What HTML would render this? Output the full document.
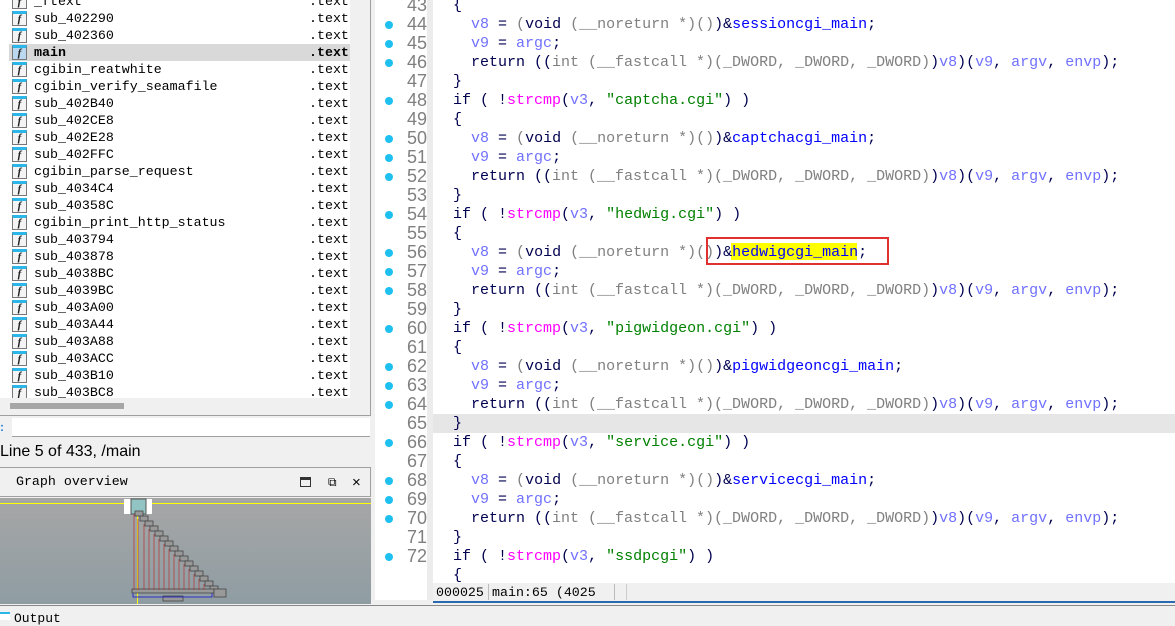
<!DOCTYPE html>
<html><head><meta charset="utf-8"><style>
*{margin:0;padding:0;box-sizing:border-box}
body{width:1175px;height:620px;overflow:hidden;background:#f0f0f0;position:relative;font-family:"Liberation Mono",monospace}
.abs{position:absolute}
#list{left:0;top:0;width:350px;height:398px;background:#fff;overflow:hidden}
.row{position:absolute;left:0;width:350px;height:17px;font-size:13.3px;line-height:17px;color:#000}
.row .ic{position:absolute;left:12px;top:1px;width:15px;height:15px;border:1px solid #777;border-top:3px solid #2bb8e8;background:#f4f4f4;font:italic bold 11px "Liberation Serif",serif;text-align:center;line-height:11px;color:#222}
.row .n{position:absolute;left:34px}
.row .s{position:absolute;left:309px}
.sel{background:#d9d9d9}
.sel .n,.sel .s{font-weight:bold}
#code{left:433px;top:0;width:742px;height:583px;background:#fff;overflow:hidden}
#gut{left:375px;top:0;width:58px;height:600px;background:#fff;overflow:hidden}
.ln{position:absolute;left:0;width:52px;height:19px;font-size:18px;line-height:19px;color:#808080;text-align:right;font-family:"Liberation Sans",sans-serif}
.dot{position:absolute;left:10px;top:6px;width:8px;height:8px;border-radius:50%;background:#1ec0f0}
.cl{position:absolute;left:20px;height:19px;font-size:15px;line-height:19px;white-space:pre;color:#000050}
.v{color:#7070ff}.g{color:#808080}.m{color:#ff00ff}.str{color:#008000}.f{color:#0000ff}
</style></head><body>
<div id="list" class="abs">
<div class="row" style="top:-7px"><span class="ic">f</span><span class="n">_ftext</span><span class="s">.text</span></div>
<div class="row" style="top:10px"><span class="ic">f</span><span class="n">sub_402290</span><span class="s">.text</span></div>
<div class="row" style="top:27px"><span class="ic">f</span><span class="n">sub_402360</span><span class="s">.text</span></div>
<div class="row sel" style="top:44px;left:9px;width:341px"><span class="ic" style="left:3px;background:#bcd8f0">f</span><span class="n" style="left:25px">main</span><span class="s" style="left:300px">.text</span></div>
<div class="row" style="top:61px"><span class="ic">f</span><span class="n">cgibin_reatwhite</span><span class="s">.text</span></div>
<div class="row" style="top:78px"><span class="ic">f</span><span class="n">cgibin_verify_seamafile</span><span class="s">.text</span></div>
<div class="row" style="top:95px"><span class="ic">f</span><span class="n">sub_402B40</span><span class="s">.text</span></div>
<div class="row" style="top:112px"><span class="ic">f</span><span class="n">sub_402CE8</span><span class="s">.text</span></div>
<div class="row" style="top:129px"><span class="ic">f</span><span class="n">sub_402E28</span><span class="s">.text</span></div>
<div class="row" style="top:146px"><span class="ic">f</span><span class="n">sub_402FFC</span><span class="s">.text</span></div>
<div class="row" style="top:163px"><span class="ic">f</span><span class="n">cgibin_parse_request</span><span class="s">.text</span></div>
<div class="row" style="top:180px"><span class="ic">f</span><span class="n">sub_4034C4</span><span class="s">.text</span></div>
<div class="row" style="top:197px"><span class="ic">f</span><span class="n">sub_40358C</span><span class="s">.text</span></div>
<div class="row" style="top:214px"><span class="ic">f</span><span class="n">cgibin_print_http_status</span><span class="s">.text</span></div>
<div class="row" style="top:231px"><span class="ic">f</span><span class="n">sub_403794</span><span class="s">.text</span></div>
<div class="row" style="top:248px"><span class="ic">f</span><span class="n">sub_403878</span><span class="s">.text</span></div>
<div class="row" style="top:265px"><span class="ic">f</span><span class="n">sub_4038BC</span><span class="s">.text</span></div>
<div class="row" style="top:282px"><span class="ic">f</span><span class="n">sub_4039BC</span><span class="s">.text</span></div>
<div class="row" style="top:299px"><span class="ic">f</span><span class="n">sub_403A00</span><span class="s">.text</span></div>
<div class="row" style="top:316px"><span class="ic">f</span><span class="n">sub_403A44</span><span class="s">.text</span></div>
<div class="row" style="top:333px"><span class="ic">f</span><span class="n">sub_403A88</span><span class="s">.text</span></div>
<div class="row" style="top:350px"><span class="ic">f</span><span class="n">sub_403ACC</span><span class="s">.text</span></div>
<div class="row" style="top:367px"><span class="ic">f</span><span class="n">sub_403B10</span><span class="s">.text</span></div>
<div class="row" style="top:384px"><span class="ic">f</span><span class="n">sub_403BC8</span><span class="s">.text</span></div>
</div>
<div class="abs" style="left:370px;top:0;width:1px;height:416px;background:#a0a0a0"></div>
<div class="abs" style="left:0;top:415px;width:371px;height:1px;background:#a0a0a0"></div>
<div class="abs" style="left:10px;top:403px;width:114px;height:6px;background:#a6a6a6"></div>
<div class="abs" style="left:12px;top:418px;width:358px;height:19px;background:#fff;border-bottom:1px solid #a0a0a0"></div>
<div class="abs" style="left:0;top:420px;color:#1e7fd8;font:bold 12px sans-serif">:</div>
<div class="abs" style="left:0;top:443px;font:16px 'Liberation Sans',sans-serif;color:#000">Line 5 of 433, /main</div>
<div class="abs" style="left:0;top:467px;width:371px;height:30px;border:1px solid #a0a0a0;border-left:none;background:#f0f0f0"></div>
<div class="abs" style="left:0;top:474px;font-size:13.3px;color:#000">&nbsp;&nbsp;Graph overview</div>
<div class="abs" style="left:300px;top:477px;width:11px;height:10px;border:1px solid #333;border-top:3px solid #333"></div>
<div class="abs" style="left:328px;top:476px;font-size:12px">&#x29C9;</div>
<div class="abs" style="left:352px;top:474px;font:15px 'Liberation Sans',sans-serif">×</div>
<div class="abs" style="left:0;top:498px;width:371px;height:106px;background:linear-gradient(#a6a6a6,#8f9da3)"></div>
<div class="abs" style="left:0;top:503px;width:371px;height:1px;background:#ffff00"></div>
<div class="abs" style="left:137px;top:503px;width:1px;height:101px;background:#ffff00"></div>
<div class="abs" style="left:124px;top:499px;width:28px;height:15px;background:#fff"></div>
<svg class="abs" style="left:0;top:498px" width="371" height="106">
<rect x="131" y="1" width="15" height="15" fill="#93c4c4" stroke="#555"/>
<g fill="#999" stroke="#444" stroke-width="0.8">
<rect x="135" y="13" width="8" height="5"/><rect x="140" y="18" width="8" height="5"/><rect x="145" y="23" width="8" height="5"/><rect x="150" y="28" width="8" height="5"/><rect x="155" y="33" width="8" height="5"/><rect x="160" y="38" width="8" height="5"/><rect x="165" y="43" width="8" height="5"/><rect x="170" y="48" width="8" height="5"/><rect x="175" y="53" width="8" height="5"/><rect x="180" y="58" width="8" height="5"/><rect x="185" y="63" width="8" height="5"/><rect x="190" y="68" width="8" height="5"/><rect x="195" y="73" width="8" height="5"/><rect x="200" y="78" width="8" height="5"/><rect x="205" y="83" width="8" height="5"/><rect x="210" y="88" width="8" height="5"/>
<rect x="132" y="91" width="82" height="4"/><rect x="214" y="91" width="12" height="8"/><rect x="163" y="98" width="20" height="5"/></g>
<g stroke="#b04040" stroke-width="0.8" fill="none"><path d="M134 16V92M138 21V92M144 26V92M149 31V92M154 36V92M159 41V92M164 46V92M169 51V92M174 56V92M179 61V92M184 66V92M189 71V92M194 76V92M199 81V92M204 86V92"/></g>
<path d="M133 95V99H212V95" stroke="#3030c0" fill="none"/>
</svg>
<div class="abs" style="left:0;top:605px;width:1175px;height:1px;background:#888"></div>
<div class="abs" style="left:0;top:612px;width:10px;height:8px;border-top:2px solid #2bb8e8;background:#fff"></div>
<div class="abs" style="left:14px;top:611px;font:13px 'Liberation Mono';color:#000">Output</div>

<div id="gut" class="abs">
<div class="abs" style="left:52px;top:0;width:6px;height:600px;background:#ececec"></div>
</div>
<div id="code" class="abs">
<div class="abs" style="left:0;top:414px;width:742px;height:19px;background:#e6e6e6"></div>
<div class="abs" style="left:298px;top:243px;width:126px;height:17px;background:#ffff00"></div>
<div class="abs" style="left:273px;top:237px;width:183px;height:28px;border:2px solid #e03030"></div>
</div>
<div class="abs" style="left:433px;top:583px;width:742px;height:20px;background:#f0f0f0;border-bottom:2px solid #2a6ab0"></div>
<div class="abs" style="left:436px;top:585px;font-size:13.3px;color:#000">000025</div>
<div class="abs" style="left:488px;top:584px;width:1px;height:16px;background:#bbb"></div>
<div class="abs" style="left:492px;top:585px;font-size:13.3px;color:#000">main:65 (4025</div>
<div class="abs" style="left:614px;top:584px;width:1px;height:16px;background:#bbb"></div>
<div class="abs" style="left:626px;top:584px;width:1px;height:16px;background:#ccc"></div>

<script>
var dots=[44,45,46,48,50,51,52,54,56,57,58,60,62,63,64,66,68,69,70,72];
var g=document.getElementById('gut');
for(var n=43;n<=72;n++){var t=-4.5+(n-43)*19;
var d=document.createElement('div');d.className='ln';d.style.top=t+'px';d.textContent=n;
if(dots.indexOf(n)>=0){var o=document.createElement('span');o.className='dot';d.appendChild(o);}g.appendChild(d);}
function asg(fn){return '  <span class="v">v8</span> = <span class="g">(</span>void <span class="g">(__noreturn *)()</span>)&amp;<span class="f">'+fn+'</span>;';}
var v9='  <span class="v">v9</span> = <span class="v">argc</span>;';
var ret='  return ((<span class="g">int (__fastcall *)(_DWORD, _DWORD, _DWORD)</span>)<span class="v">v8</span>)(<span class="v">v9</span>, <span class="v">argv</span>, <span class="v">envp</span>);';
function iff(s){return 'if ( !<span class="m">strcmp</span>(<span class="v">v3</span>, <span class="str">"'+s+'"</span>) )';}
var L=['{',asg('sessioncgi_main'),v9,ret,'}',iff('captcha.cgi'),'{',asg('captchacgi_main'),v9,ret,'}',iff('hedwig.cgi'),'{',asg('hedwigcgi_main'),v9,ret,'}',iff('pigwidgeon.cgi'),'{',asg('pigwidgeoncgi_main'),v9,ret,'}',iff('service.cgi'),'{',asg('servicecgi_main'),v9,ret,'}',iff('ssdpcgi'),'{'];
var c=document.getElementById('code');
L.forEach(function(s,i){var d=document.createElement('div');d.className='cl';d.style.top=(-4.5+i*19)+'px';d.innerHTML=s;c.appendChild(d);});
</script>
</body></html>
